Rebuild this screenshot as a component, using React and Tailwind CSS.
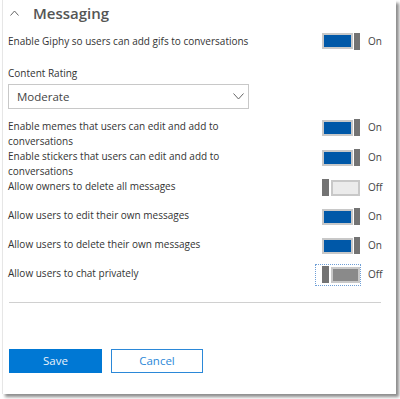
import React from 'react';

function Toggle({ on, dark }) {
    if (on) {
        return (
            <div className="flex items-center w-[38px] h-[17px]">
                <div className="w-[31px] h-[16px] border-2 border-[#c8c8c8] bg-[#0058a8]" />
                <div className="ml-[1px] w-[6px] h-[17px] bg-[#737373]" />
            </div>
        );
    }
    return (
        <div className="flex items-center w-[38px] h-[17px]">
            <div className="w-[7px] h-[17px] bg-[#737373]" />
            <div
                className={
                    dark
                        ? 'ml-[2px] w-[29px] h-[16px] border-2 border-[#c8c8c8] bg-[#8a8a8a]'
                        : 'ml-[2px] w-[29px] h-[16px] border-2 border-[#c8c8c8] bg-[#ebebeb]'
                }
            />
        </div>
    );
}

function SettingRow({ label, on, height, focused, dark }) {
    return (
        <div className={`flex items-start ${height}`}>
            <div className="w-[300px] pr-[45px] leading-[15px]">{label}</div>
            <div className="relative ml-[14px]">
                {focused && (
                    <span className="absolute -left-[7px] -top-[2px] w-[46px] h-[22px] border border-dotted border-[#6f9fd6]" />
                )}
                <Toggle on={on} dark={dark} />
            </div>
            <span className="ml-[8px] leading-[17px] text-[#444]">{on ? 'On' : 'Off'}</span>
        </div>
    );
}

export default function App() {
    return (
        <div className="w-[400px] h-[399px] bg-white font-['Open_Sans',sans-serif] text-[10px] text-[#333]">
            <div className="ml-[2px] w-[394px] h-[394px] bg-white border-l border-[#e6e6e6] shadow-[3px_3px_3px_rgba(0,0,0,0.45)] pl-[5px]">
                <div className="flex items-center h-[26px]">
                    <svg width="9" height="6" viewBox="0 0 9 6" className="ml-[2px]">
                        <path d="M0.5 5.5 L4.5 1 L8.5 5.5" fill="none" stroke="#666" strokeWidth="1" />
                    </svg>
                    <span className="ml-[14px] text-[15px] font-semibold text-[#555] leading-none">Messaging</span>
                </div>

                <div className="mt-[6px] flex items-center h-[18px]">
                    <div className="w-[300px]">Enable Giphy so users can add gifs to conversations</div>
                    <div className="ml-[14px]">
                        <Toggle on />
                    </div>
                    <span className="ml-[8px] text-[#444]">On</span>
                </div>

                <div className="mt-[16px] leading-[15px]">Content Rating</div>

                <div className="mt-[3px] flex items-center justify-between w-[241px] h-[25px] border border-[#c8c8c8] pl-[8px] pr-[4px] text-[11.5px] text-[#444]">
                    <span>Moderate</span>
                    <svg width="11" height="7" viewBox="0 0 11 7">
                        <path d="M0.5 0.5 L5.5 6 L10.5 0.5" fill="none" stroke="#666" strokeWidth="1" />
                    </svg>
                </div>

                <div className="mt-[10px]">
                    <SettingRow label="Enable memes that users can edit and add to conversations" on height="h-[30px]" />
                    <SettingRow label="Enable stickers that users can edit and add to conversations" on height="h-[30px]" />
                    <SettingRow label="Allow owners to delete all messages" on={false} height="h-[29px]" />
                    <SettingRow label="Allow users to edit their own messages" on height="h-[29px]" />
                    <SettingRow label="Allow users to delete their own messages" on height="h-[29px]" />
                    <SettingRow label="Allow users to chat privately" on={false} dark focused height="h-[29px]" />
                </div>

                <div className="mt-[7px] ml-[1px] w-[372px] h-px bg-[#d0d0d0]" />

                <div className="mt-[46px] ml-[1px] flex">
                    <button className="w-[93px] h-[24px] bg-[#0078d4] text-[#e8f2fb] text-[11.5px]">Save</button>
                    <button className="ml-[9px] w-[92px] h-[24px] border border-[#2b88d8] text-[#2b88d8] text-[11.5px] bg-white">Cancel</button>
                </div>
            </div>
        </div>
    );
}
